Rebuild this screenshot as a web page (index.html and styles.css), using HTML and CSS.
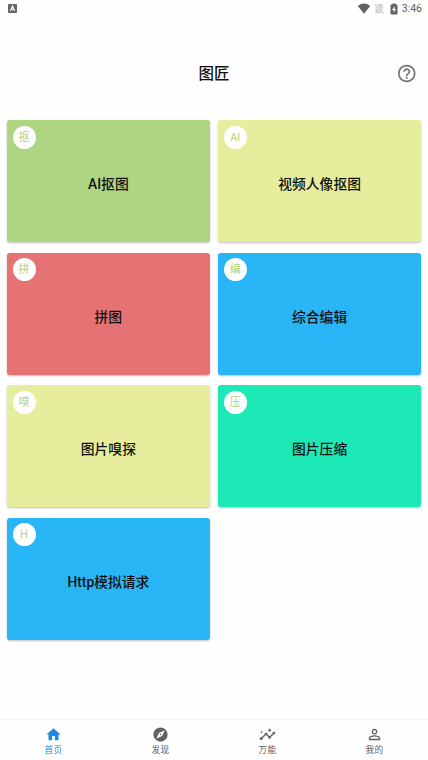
FILE: index.html
```html
<!DOCTYPE html>
<html lang="zh-CN">
<head>
<meta charset="utf-8">
<title>图匠</title>
<link rel="stylesheet" href="styles.css">
</head>
<body>
<div class="status">
  <svg class="status-app" viewBox="0 0 9 9"><rect width="9" height="9" rx="1" fill="#666"/><path d="M2.5 7L4.5 2L6.5 7M3.2 5.3H5.8" fill="none" stroke="#fff" stroke-width="1.1"/></svg>
  <div class="status-right">
    <svg class="wifi" viewBox="0 0 14 11"><path d="M0.8 3Q7-1.8 13.2 3L7 10.7Z" fill="#606060"/></svg>
    <svg class="sim" viewBox="0 0 10 11"><path d="M3.5 1H8.5V10H1.5V3Z" fill="#d2d2d2"/><path d="M0.5 1L9.5 10.5" stroke="#fff" stroke-width="2.4"/><path d="M0.5 1L9.5 10.5" stroke="#aaa" stroke-width="1"/></svg>
    <svg class="battery" viewBox="0 0 8 12"><path d="M2.5 0.5H5.5V1.5H6.5Q7.5 1.5 7.5 2.5V10.5Q7.5 11.5 6.5 11.5H1.5Q.5 11.5 .5 10.5V2.5Q.5 1.5 1.5 1.5H2.5Z" fill="#606060"/><path d="M4.5 3L2 7H3.7V10L6 6H4.5Z" fill="#fff"/></svg>
    <span>3:46</span>
  </div>
</div>
<header class="header">
  <h1>图匠</h1>
  <svg class="help" viewBox="0 0 24 24"><path d="M11 18h2v-2h-2v2zm1-16C6.48 2 2 6.48 2 12s4.48 10 10 10 10-4.48 10-10S17.52 2 12 2zm0 18c-4.41 0-8-3.59-8-8s3.59-8 8-8 8 3.59 8 8-3.59 8-8 8zm0-14c-2.21 0-4 1.79-4 4h2c0-1.1.9-2 2-2s2 .9 2 2c0 2-3 1.75-3 5h2c0-2.25 3-2.5 3-5 0-2.21-1.79-4-4-4z"/></svg>
</header>
<main class="grid">
  <section class="card green"><span class="badge">抠</span><span>AI抠图</span></section>
  <section class="card lime"><span class="badge">AI</span><span>视频人像抠图</span></section>
  <section class="card red"><span class="badge">拼</span><span>拼图</span></section>
  <section class="card blue"><span class="badge">编</span><span>综合编辑</span></section>
  <section class="card lime"><span class="badge">嗅</span><span>图片嗅探</span></section>
  <section class="card teal"><span class="badge">压</span><span>图片压缩</span></section>
  <section class="card blue"><span class="badge">H</span><span>Http模拟请求</span></section>
</main>
<nav class="nav">
  <a class="tab active"><svg viewBox="0 0 24 24"><path d="M10 20v-6h4v6h5v-8h3L12 3 2 12h3v8z"/></svg><span>首页</span></a>
  <a class="tab"><svg viewBox="0 0 24 24"><path d="M12 10.9c-.61 0-1.1.49-1.1 1.1s.49 1.1 1.1 1.1c.61 0 1.1-.49 1.1-1.1s-.49-1.1-1.1-1.1zM12 2C6.48 2 2 6.48 2 12s4.48 10 10 10 10-4.48 10-10S17.52 2 12 2zm2.19 12.19L6 18l3.81-8.19L18 6l-3.81 8.19z"/></svg><span>发现</span></a>
  <a class="tab"><svg viewBox="0 0 24 24"><path d="M21 8c-1.45 0-2.26 1.44-1.93 2.51l-3.55 3.56c-.3-.09-.74-.09-1.04 0l-2.55-2.55C12.27 10.45 11.46 9 10 9c-1.45 0-2.27 1.44-1.93 2.52l-4.56 4.55C2.44 15.74 1 16.55 1 18c0 1.1.9 2 2 2 1.45 0 2.26-1.44 1.93-2.51l4.55-4.56c.3.09.74.09 1.04 0l2.55 2.55C12.73 16.55 13.54 18 15 18c1.45 0 2.27-1.44 1.93-2.52l3.56-3.55C21.56 12.26 23 11.45 23 10c0-1.1-.9-2-2-2z"/><path d="M15 9l.94-2.07L18 6l-2.06-.93L15 3l-.92 2.07L12 6l2.08.93zM3.5 11L4 9l2-.5L4 8l-.5-2L3 8l-2 .5L3 9z"/></svg><span>万能</span></a>
  <a class="tab"><svg viewBox="0 0 24 24"><path d="M12 5.9a2.1 2.1 0 110 4.2 2.1 2.1 0 010-4.2m0 9c2.97 0 6.1 1.46 6.1 2.1v1.1H5.9V17c0-.64 3.13-2.1 6.1-2.1M12 4C9.79 4 8 5.79 8 8s1.79 4 4 4 4-1.79 4-4-1.79-4-4-4zm0 9c-2.67 0-8 1.34-8 4v3h16v-3c0-2.66-5.33-4-8-4z"/></svg><span>我的</span></a>
</nav>
</body>
</html>
```
FILE: styles.css
```css
* { box-sizing: border-box; }
body {
  margin: 0;
  width: 428px;
  height: 760px;
  display: flex;
  flex-direction: column;
  overflow: hidden;
  background: #fefefe;
  color: #111;
  font-family: Roboto, "Noto Sans CJK SC", sans-serif;
}
svg { display: block; fill: currentColor; }
.status {
  height: 17px;
  display: flex;
  align-items: center;
  justify-content: space-between;
  padding: 0 6px 0 8px;
  color: #606060;
  font-size: 10.5px;
}
.status-app { width: 9px; height: 9px; }
.status-right { display: flex; align-items: center; }
.wifi { width: 14px; height: 11px; margin-right: 3px; }
.sim { width: 10px; height: 11px; margin-right: 6px; }
.battery { width: 8px; height: 12px; margin-right: 4px; }
.header {
  height: 103px;
  padding: 46px 11px 0;
  display: grid;
  grid-template-columns: 1fr auto 1fr;
  align-items: start;
}
.header h1 {
  grid-column: 2;
  margin: 0;
  font-size: 15.5px;
  line-height: 23px;
  font-weight: 500;
}
.help { width: 21.5px; height: 21px; justify-self: end; color: #757575; }
.grid {
  flex: 1;
  display: grid;
  grid-template-columns: 1fr 1fr;
  grid-auto-rows: 122.3px;
  gap: 10.3px 8.5px;
  padding: 0 7px;
}
.card {
  position: relative;
  display: flex;
  align-items: center;
  justify-content: center;
  padding-top: 4px;
  border-radius: 3px;
  box-shadow: 0 1px 2px rgba(0, 0, 0, .25);
  font-size: 13.8px;
  font-weight: 500;
}
.badge {
  position: absolute;
  left: 5.5px;
  top: 5.5px;
  width: 23px;
  height: 23px;
  border-radius: 50%;
  background: #fff;
  color: #aed581;
  font-size: 11px;
  font-weight: 400;
  line-height: 23.5px;
  text-align: center;
}
.green { background: #aed581; }
.lime { background: #e6ed9c; }
.red { background: #e57373; }
.blue { background: #29b6f6; }
.teal { background: #1de9b6; }
.nav {
  height: 41px;
  display: flex;
  border-top: 1px solid #f4f4f4;
}
.tab {
  flex: 1;
  display: flex;
  flex-direction: column;
  align-items: center;
  padding-top: 6px;
  color: #626262;
  font-size: 8.6px;
  letter-spacing: .3px;
  line-height: 14px;
}
.tab svg { width: 17px; height: 17px; }
.active { color: #1e88e5; }
```
